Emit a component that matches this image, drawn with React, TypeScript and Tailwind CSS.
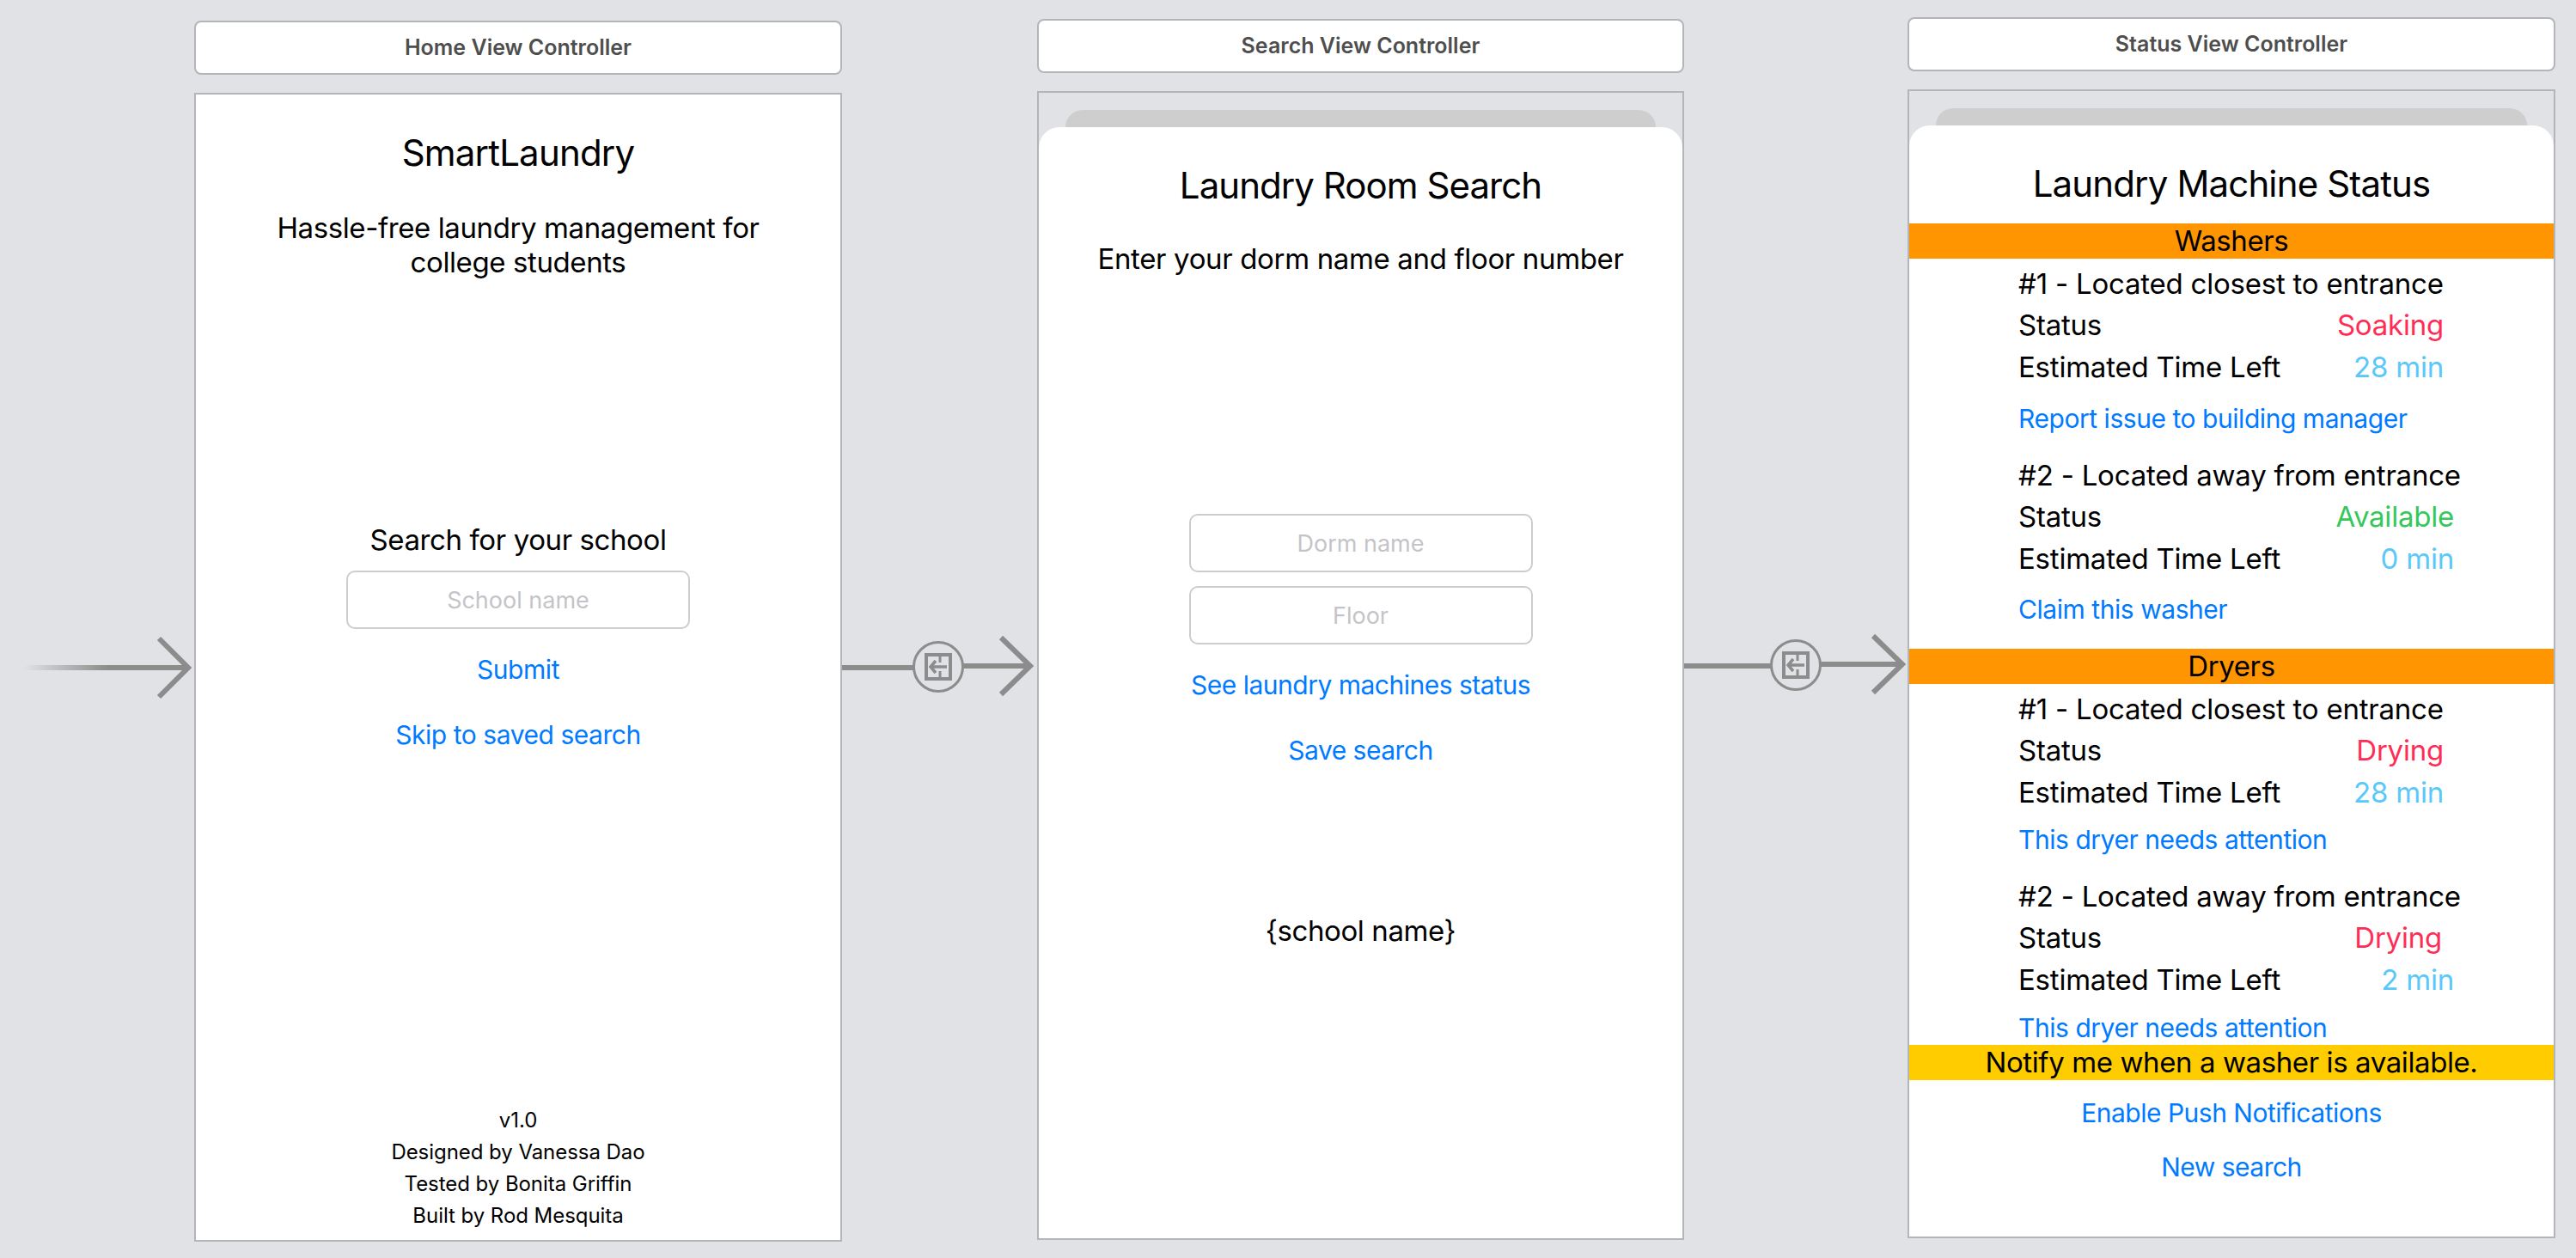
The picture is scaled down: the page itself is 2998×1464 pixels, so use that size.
import React from "react";

const BLUE = "text-[#007aff]";

function Connector({ width, top, cx, tip, gid, fade }: { width: number; top: number; cx: number; tip: number; gid?: string; fade?: boolean }) {
  const c = "#8c8c8c";
  return (
    <div className="shrink-0" style={{ width, paddingTop: top }}>
      <svg width={width} height={90} viewBox={`0 0 ${width} 90`} className="block">
        {fade ? (
          <>
            <defs>
              <linearGradient id={gid} x1="28" x2="125" y1="0" y2="0" gradientUnits="userSpaceOnUse">
                <stop offset="0" stopColor={c} stopOpacity="0" />
                <stop offset="1" stopColor={c} />
              </linearGradient>
            </defs>
            <rect x="28" y="43" width={tip - 30} height="6" fill={`url(#${gid})`} />
          </>
        ) : (
          <>
            <rect x="0" y="44" width={cx - 29} height="6" fill={c} />
            <circle cx={cx} cy="46" r="28.5" fill="none" stroke={c} strokeWidth="3" />
            <rect x={cx - 14} y="32" width="28" height="28" fill="none" stroke={c} strokeWidth="4" />
            <path d={`M${cx + 2} 32V41M${cx + 2} 51V60`} fill="none" stroke={c} strokeWidth="3" />
            <path d={`M${cx + 10} 46H${cx - 8}M${cx - 3} 39L${cx - 9} 46L${cx - 3} 53`} fill="none" stroke={c} strokeWidth="3.5" />
            <rect x={cx + 29} y="42" width={tip - cx - 31} height="6" fill={c} />
          </>
        )}
        <path d={`M${tip - 35} 12L${tip - 1} ${fade ? 46 : 45}L${tip - 35} ${fade ? 80 : 78}`} fill="none" stroke={c} strokeWidth="6" />
      </svg>
    </div>
  );
}

function Column({ top, width, title, height, children, sheet }: { top: number; width: number; title: string; height: number; children: React.ReactNode; sheet?: boolean }) {
  return (
    <div className="shrink-0 flex flex-col" style={{ paddingTop: top, width }}>
      <div className="h-[63px] pt-[1px] rounded-[8px] border-2 border-[#b4b5b8] bg-white flex items-center justify-center text-[25px] font-semibold text-[#4e4e4e]">
        {title}
      </div>
      <div className={`mt-[21px] border-2 border-[#b4b5b8] flex flex-col ${sheet ? "bg-[#e1e2e6]" : "bg-white"}`} style={{ height }}>
        {sheet ? (
          <>
            <div className="mt-[20px] mx-[31px] h-[20px] rounded-t-[20px] bg-[#cecece] shrink-0" />
            <div className="flex-1 rounded-t-[24px] bg-white flex flex-col">{children}</div>
          </>
        ) : (
          children
        )}
      </div>
    </div>
  );
}

function Field({ placeholder, className = "" }: { placeholder: string; className?: string }) {
  return (
    <input
      readOnly
      placeholder={placeholder}
      className={`block w-[400px] h-[68px] mx-auto rounded-[10px] border-2 border-[#cdcdcd] bg-white text-center text-[27px] outline-none placeholder:text-[#c4c4c8] ${className}`}
    />
  );
}

function Machine({ head, status, statusColor, time, action, statusW, timeW, actionClass, first }: { head: string; status: string; statusColor: string; time: string; action: string; statusW: string; timeW: string; actionClass: string; first: string }) {
  return (
    <div className={`${first} pl-[127px] flex flex-col text-[33px] tracking-[-0.22px] leading-[40px]`}>
      <div className="h-[40px] whitespace-nowrap">{head}</div>
      <div className={`mt-[8px] h-[40px] flex justify-between ${statusW}`}>
        <span>Status</span>
        <span className={statusColor}>{status}</span>
      </div>
      <div className={`mt-[9px] h-[40px] flex justify-between ${timeW}`}>
        <span>Estimated Time Left</span>
        <span className="text-[#5ac8fa]">{time}</span>
      </div>
      <div className={`${actionClass} h-[40px] text-[30px] tracking-[-0.45px] ${BLUE}`}>{action}</div>
    </div>
  );
}

export default function App() {
  return (
    <div className="w-[2998px] h-[1464px] overflow-hidden bg-[#e1e2e6] flex items-start font-['Inter',sans-serif] text-black">
      <Connector width={226} top={731} cx={0} tip={220} gid="fade" fade />
      <Column top={24} width={754} title="Home View Controller" height={1337}>
        <div className="mt-[46px] h-[44px] text-center text-[42px] leading-[44px] tracking-[-0.8px]">SmartLaundry</div>
        <div className="mt-[45px] text-center text-[33px] leading-[40px] tracking-[-0.4px]">
          Hassle-free laundry management for
          <br />
          college students
        </div>
        <div className="mt-[283px] h-[40px] text-center text-[33px] leading-[40px] tracking-[-0.4px]">Search for your school</div>
        <Field placeholder="School name" className="mt-[16px]" />
        <div className={`mt-[27px] h-[40px] text-center text-[30px] leading-[40px] tracking-[-0.45px] ${BLUE}`}>Submit</div>
        <div className={`mt-[36px] h-[40px] text-center text-[30px] leading-[40px] tracking-[-0.45px] ${BLUE}`}>Skip to saved search</div>
        <div className="mt-auto mb-[10px] flex flex-col text-center text-[24px] leading-[37px] tracking-[-0.05px]">
          <div>v1.0</div>
          <div>Designed by Vanessa Dao</div>
          <div>Tested by Bonita Griffin</div>
          <div>Built by Rod Mesquita</div>
        </div>
      </Column>
      <Connector width={227} top={730} cx={112} tip={220} />
      <Column top={22} width={753} title="Search View Controller" height={1337} sheet>
        <div className="mt-[46px] h-[44px] text-center text-[42px] leading-[44px] tracking-[-0.95px]">Laundry Room Search</div>
        <div className="mt-[43px] h-[40px] text-center text-[33px] leading-[40px] tracking-[-0.35px]">Enter your dorm name and floor number</div>
        <Field placeholder="Dorm name" className="mt-[277px]" />
        <Field placeholder="Floor" className="mt-[16px]" />
        <div className={`mt-[27px] h-[40px] text-center text-[30px] leading-[40px] tracking-[-0.5px] ${BLUE}`}>See laundry machines status</div>
        <div className={`mt-[36px] h-[40px] text-center text-[30px] leading-[40px] tracking-[-0.5px] ${BLUE}`}>Save search</div>
        <div className="mt-[170px] h-[40px] text-center text-[33px] leading-[40px] tracking-[-0.4px]">{"{school name}"}</div>
      </Column>
      <Connector width={260} top={728} cx={130} tip={255} />
      <Column top={20} width={754} title="Status View Controller" height={1337} sheet>
        <div className="mt-[46px] h-[44px] text-center text-[42px] leading-[44px] tracking-[-0.85px]">Laundry Machine Status</div>
        <div className="mt-[24px] h-[41px] bg-[#ff9500] text-center text-[33px] leading-[41px] tracking-[-0.4px]">Washers</div>
        <Machine first="mt-[9px]" head="#1 - Located closest to entrance" status="Soaking" statusColor="text-[#ff2d55]" time="28 min" action="Report issue to building manager" statusW="w-[495px]" timeW="w-[495px]" actionClass="mt-[20px]" />
        <Machine first="mt-[26px]" head="#2 - Located away from entrance" status="Available" statusColor="text-[#34c759]" time="0 min" action="Claim this washer" statusW="w-[507px]" timeW="w-[507px]" actionClass="mt-[19px]" />
        <div className="mt-[26px] h-[41px] bg-[#ff9500] text-center text-[33px] leading-[41px] tracking-[-0.4px]">Dryers</div>
        <Machine first="mt-[9px]" head="#1 - Located closest to entrance" status="Drying" statusColor="text-[#ff2d55]" time="28 min" action="This dryer needs attention" statusW="w-[495px]" timeW="w-[495px]" actionClass="mt-[15px]" />
        <Machine first="mt-[26px]" head="#2 - Located away from entrance" status="Drying" statusColor="text-[#ff2d55]" time="2 min" action="This dryer needs attention" statusW="w-[493px]" timeW="w-[507px]" actionClass="mt-[16px]" />
        <div className="mt-0 h-[41px] bg-[#ffcc00] text-center text-[33px] leading-[41px] tracking-[-0.4px]">Notify me when a washer is available.</div>
        <div className={`mt-[18px] h-[40px] text-center text-[30px] leading-[40px] tracking-[-0.5px] ${BLUE}`}>Enable Push Notifications</div>
        <div className={`mt-[23px] h-[40px] text-center text-[30px] leading-[40px] tracking-[-0.5px] ${BLUE}`}>New search</div>
      </Column>
    </div>
  );
}
